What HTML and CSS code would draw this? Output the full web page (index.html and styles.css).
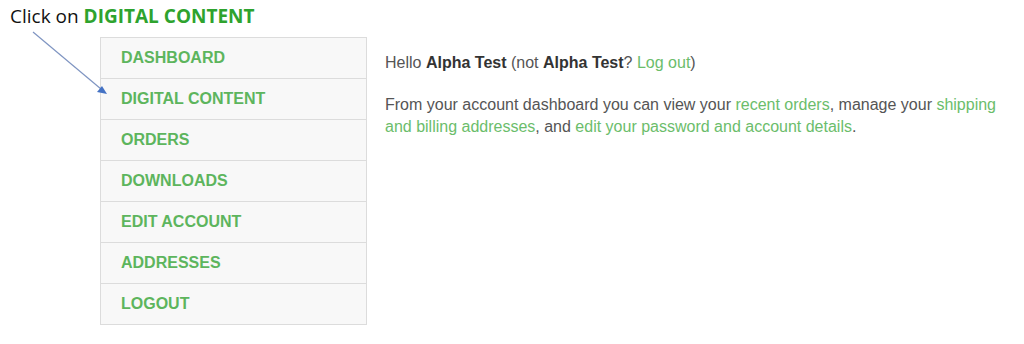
FILE: index.html
```html
<!DOCTYPE html>
<html>
<head>
<meta charset="utf-8">
<link rel="stylesheet" href="styles.css">
</head>
<body>
<div class="caption">Click on <strong>DIGITAL CONTENT</strong></div>
<svg class="arrow" width="120" height="110" viewBox="0 0 120 110">
  <line x1="33" y1="32" x2="101" y2="89" stroke="#7f95c2" stroke-width="1.2"/>
  <polygon points="107,94 97,92 102,86" fill="#4472c4"/>
</svg>
<div class="account">
  <ul class="nav">
    <li class="nav-item"><a href="#">DASHBOARD</a></li>
    <li class="nav-item"><a href="#">DIGITAL CONTENT</a></li>
    <li class="nav-item"><a href="#">ORDERS</a></li>
    <li class="nav-item"><a href="#">DOWNLOADS</a></li>
    <li class="nav-item"><a href="#">EDIT ACCOUNT</a></li>
    <li class="nav-item"><a href="#">ADDRESSES</a></li>
    <li class="nav-item"><a href="#">LOGOUT</a></li>
  </ul>
  <div class="content">
    <p class="hello">Hello <strong>Alpha Test</strong> (not <strong>Alpha Test</strong>? <a href="#">Log out</a>)</p>
    <p>From your account dashboard you can view your <a href="#">recent orders</a>, manage your <a href="#">shipping and billing addresses</a>, and <a href="#">edit your password and account details</a>.</p>
  </div>
</div>
</body>
</html>
```

FILE: styles.css
```css
html, body {
  margin: 0;
  padding: 0;
  background: #fff;
}
body {
  position: relative;
  width: 1024px;
  height: 344px;
  overflow: hidden;
}
.caption {
  height: 37px;
  box-sizing: border-box;
  padding: 3px 0 0 10px;
  font-family: "Open Sans", "Noto Sans", sans-serif;
  font-size: 19px;
  line-height: 26px;
  color: #111;
}
.caption strong {
  color: #2ea32e;
  font-weight: 700;
}
.arrow {
  position: absolute;
  left: 0;
  top: 0;
}
.account {
  display: flex;
  align-items: flex-start;
  gap: 18px;
  padding-left: 100px;
}
.nav {
  list-style: none;
  margin: 0;
  padding: 0;
  width: 267px;
  box-sizing: border-box;
  border: 1px solid #dcdcdc;
  background: #f8f8f8;
}
.nav-item {
  height: 40px;
  display: flex;
  align-items: center;
  padding-left: 20px;
  border-top: 1px solid #dcdcdc;
}
.nav-item:first-child {
  border-top: none;
}
.nav-item a {
  font-family: "Liberation Sans", Arial, sans-serif;
  font-weight: 700;
  font-size: 16px;
  color: #5db55d;
  text-decoration: none;
}
.content {
  width: 630px;
  padding-top: 15px;
  font-family: "Liberation Sans", Arial, sans-serif;
  font-size: 16px;
  line-height: 22px;
  color: #555;
}
.content p {
  margin: 0 0 20px 0;
}
.content strong {
  color: #333;
}
.content a {
  color: #6bbd6b;
  text-decoration: none;
}
```
